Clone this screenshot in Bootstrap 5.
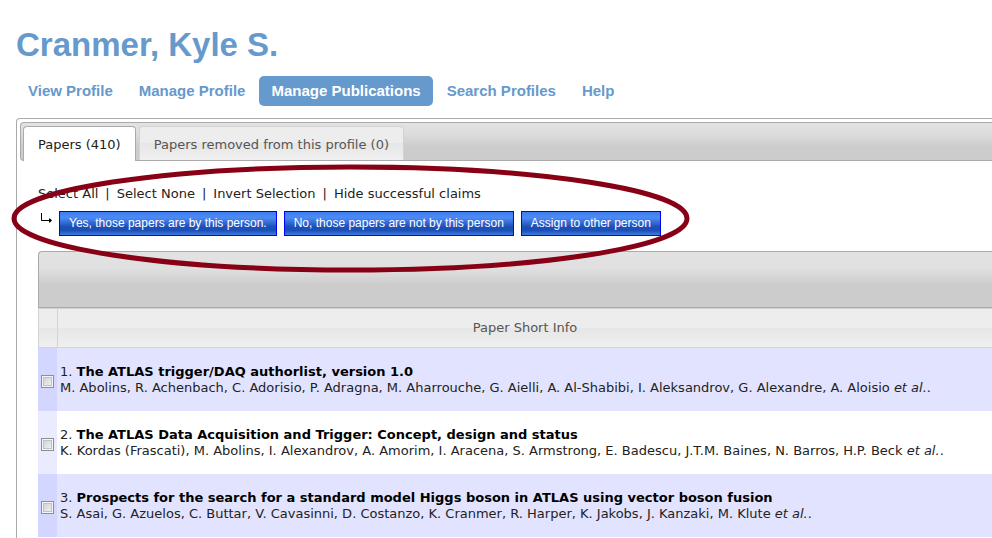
<!DOCTYPE html>
<html lang="en">
<head>
<meta charset="utf-8">
<meta name="viewport" content="width=device-width, initial-scale=1">
<title>Cranmer, Kyle S. - Manage Publications</title>
<link href="https://cdn.jsdelivr.net/npm/bootstrap@5.3.0/dist/css/bootstrap.min.css" rel="stylesheet">
<style>
body { font: 13px/16px "DejaVu Sans", Verdana, sans-serif; color: #222; background: #fff; }
.page { padding: 26px 0 0 16px; }
.person { font: bold 33px/38px "Liberation Sans", Arial, sans-serif; color: #69c; margin-bottom: 12px; }
.sections { gap: 2px; margin-bottom: 12px; }
.sections .nav-link { font: bold 15px/20px "Liberation Sans", Arial, sans-serif; color: #69c; padding: 5px 12px; border-radius: 5px; }
.sections .nav-link.active { color: #fff; background: #69c; }
.panel { border: 1px solid #aaa; border-width: 1px 0 0 1px; border-top-left-radius: 4px; padding: 3px 0 0 3px; }
.tabstrip { border: 1px solid #aaa; border-right: 0; border-radius: 4px 0 0 4px; padding: 3px 0 0 2px; gap: 3px; background: linear-gradient(#e2e2e2, #dedede 25%, #ccc 65%, #ccc); }
.tabstrip .nav-link { color: #555; border: 1px solid #d3d3d3; border-bottom: 0; border-radius: 4px 4px 0 0; padding: 10px 14px 7px; background: linear-gradient(#ededed 50%, #e6e6e6 50%, #f0f0f0); }
.tabstrip .nav-link.active { color: #212121; background: #fff; border-color: #aaa; margin-bottom: -1px; padding-bottom: 8px; }
.content-pane { padding: 25px 0 0 18px; }
.choices { gap: 7px; }
.choices a { color: #222; text-decoration: none; }
.actions { gap: 7px; margin: 9px 0 15px; }
.arrow { width: 14px; height: 12px; margin-top: 1px; }
.btn-claim { font: 12px/15px "Liberation Sans", Arial, sans-serif; color: #fff; border: 1px solid #00f; border-radius: 0; padding: 4px 9px; background: linear-gradient(#3b7df0, #4d8af5 25%, #1c4fb5 65%, #1c4fb5 80%, #3f7be8); }
.btn-claim:hover { color: #fff; background: #1c4fb5; }
.toolbar { height: 57px; border: 1px solid #aaa; border-right: 0; border-top-left-radius: 4px; background: linear-gradient(#e2e2e2, #e0e0e0 30%, #ccc 60%, #ccc); }
.papers { border-collapse: separate; border-spacing: 0; }
.papers td { height: 63px; padding: 0 3px; vertical-align: middle; }
.papers .pick { width: 19px; background: #eaebff; }
.papers .shaded td { background: #e2e4ff; }
.papers .shaded .pick { background: #d3d6ff; }
.papers thead th, .papers thead .pick { height: 40px; padding: 0; font-weight: 400; color: #555; text-align: center; border: 1px solid #d3d3d3; border-width: 1px 0 1px 1px; background: linear-gradient(#ededed 50%, #e6e6e6 50%, #f0f0f0); }
.papers strong { color: #000; }
.papers input { appearance: none; display: block; width: 13px; height: 13px; margin: 4px 0 0; border: 1px solid #8e8f8f; box-shadow: inset 0 0 0 1px #f4f4f4, inset 0 0 0 2px #bdc3c9; background: linear-gradient(135deg, #c8cdd2, #f6f6f6); }
.papers input:checked { background: #36c; }
.highlight { left: -6px; top: 45px; width: 679px; height: 109px; }
</style>
<script src="https://cdn.jsdelivr.net/npm/bootstrap@5.3.0/dist/js/bootstrap.bundle.min.js"></script>
</head>
<body>
<div class="page min-vh-100 d-flex flex-column">
  <h1 class="person">Cranmer, Kyle S.</h1>
  <nav class="nav sections" aria-label="Profile sections">
    <a class="nav-link" href="#">View Profile</a>
    <a class="nav-link" href="#">Manage Profile</a>
    <a class="nav-link active" href="#" aria-current="page">Manage Publications</a>
    <a class="nav-link" href="#">Search Profiles</a>
    <a class="nav-link" href="#">Help</a>
  </nav>
  <main class="panel position-relative flex-grow-1">
    <nav class="nav tabstrip align-items-end" aria-label="Paper lists">
      <a class="nav-link active" href="#" aria-current="true">Papers (410)</a>
      <a class="nav-link" href="#">Papers removed from this profile (0)</a>
    </nav>
    <div class="content-pane">
      <div class="choices d-flex flex-wrap"><a href="#">Select All</a><span>|</span><a href="#">Select None</a><span>|</span><a href="#">Invert Selection</a><span>|</span><a href="#">Hide successful claims</a></div>
      <div class="actions d-flex flex-wrap align-items-start">
        <svg class="arrow" viewBox="0 0 14 12" aria-hidden="true"><path d="M3.500 1v7.500H12" fill="none" stroke="#000"/><path d="M11 6.500h1L14 8.500l-2 2h-1z"/></svg>
        <button type="button" class="btn btn-claim">Yes, those papers are by this person.</button>
        <button type="button" class="btn btn-claim">No, those papers are not by this person</button>
        <button type="button" class="btn btn-claim">Assign to other person</button>
      </div>
      <div class="toolbar"></div>
      <table class="papers w-100">
        <thead><tr><th class="pick" aria-label="Select"></th><th>Paper Short Info</th></tr></thead>
        <tbody>
          <tr class="shaded">
            <td class="pick"><input type="checkbox" aria-labelledby="p1"></td>
            <td>1. <strong id="p1">The ATLAS trigger/DAQ authorlist, version 1.0</strong><br>M. Abolins, R. Achenbach, C. Adorisio, P. Adragna, M. Aharrouche, G. Aielli, A. Al-Shabibi, I. Aleksandrov, G. Alexandre, A. Aloisio <em>et al.</em>.</td>
          </tr>
          <tr>
            <td class="pick"><input type="checkbox" aria-labelledby="p2"></td>
            <td>2. <strong id="p2">The ATLAS Data Acquisition and Trigger: Concept, design and status</strong><br>K. Kordas (Frascati), M. Abolins, I. Alexandrov, A. Amorim, I. Aracena, S. Armstrong, E. Badescu, J.T.M. Baines, N. Barros, H.P. Beck <em>et al.</em>.</td>
          </tr>
          <tr class="shaded">
            <td class="pick"><input type="checkbox" aria-labelledby="p3"></td>
            <td>3. <strong id="p3">Prospects for the search for a standard model Higgs boson in ATLAS using vector boson fusion</strong><br>S. Asai, G. Azuelos, C. Buttar, V. Cavasinni, D. Costanzo, K. Cranmer, R. Harper, K. Jakobs, J. Kanzaki, M. Klute <em>et al.</em>.</td>
          </tr>
        </tbody>
      </table>
    </div>
    <svg class="highlight position-absolute pe-none" viewBox="0 0 679 109" aria-hidden="true"><ellipse cx="339.500" cy="54.500" rx="336.500" ry="51.500" fill="none" stroke="#880015" stroke-width="5"/></svg>
  </main>
</div>
</body>
</html>
